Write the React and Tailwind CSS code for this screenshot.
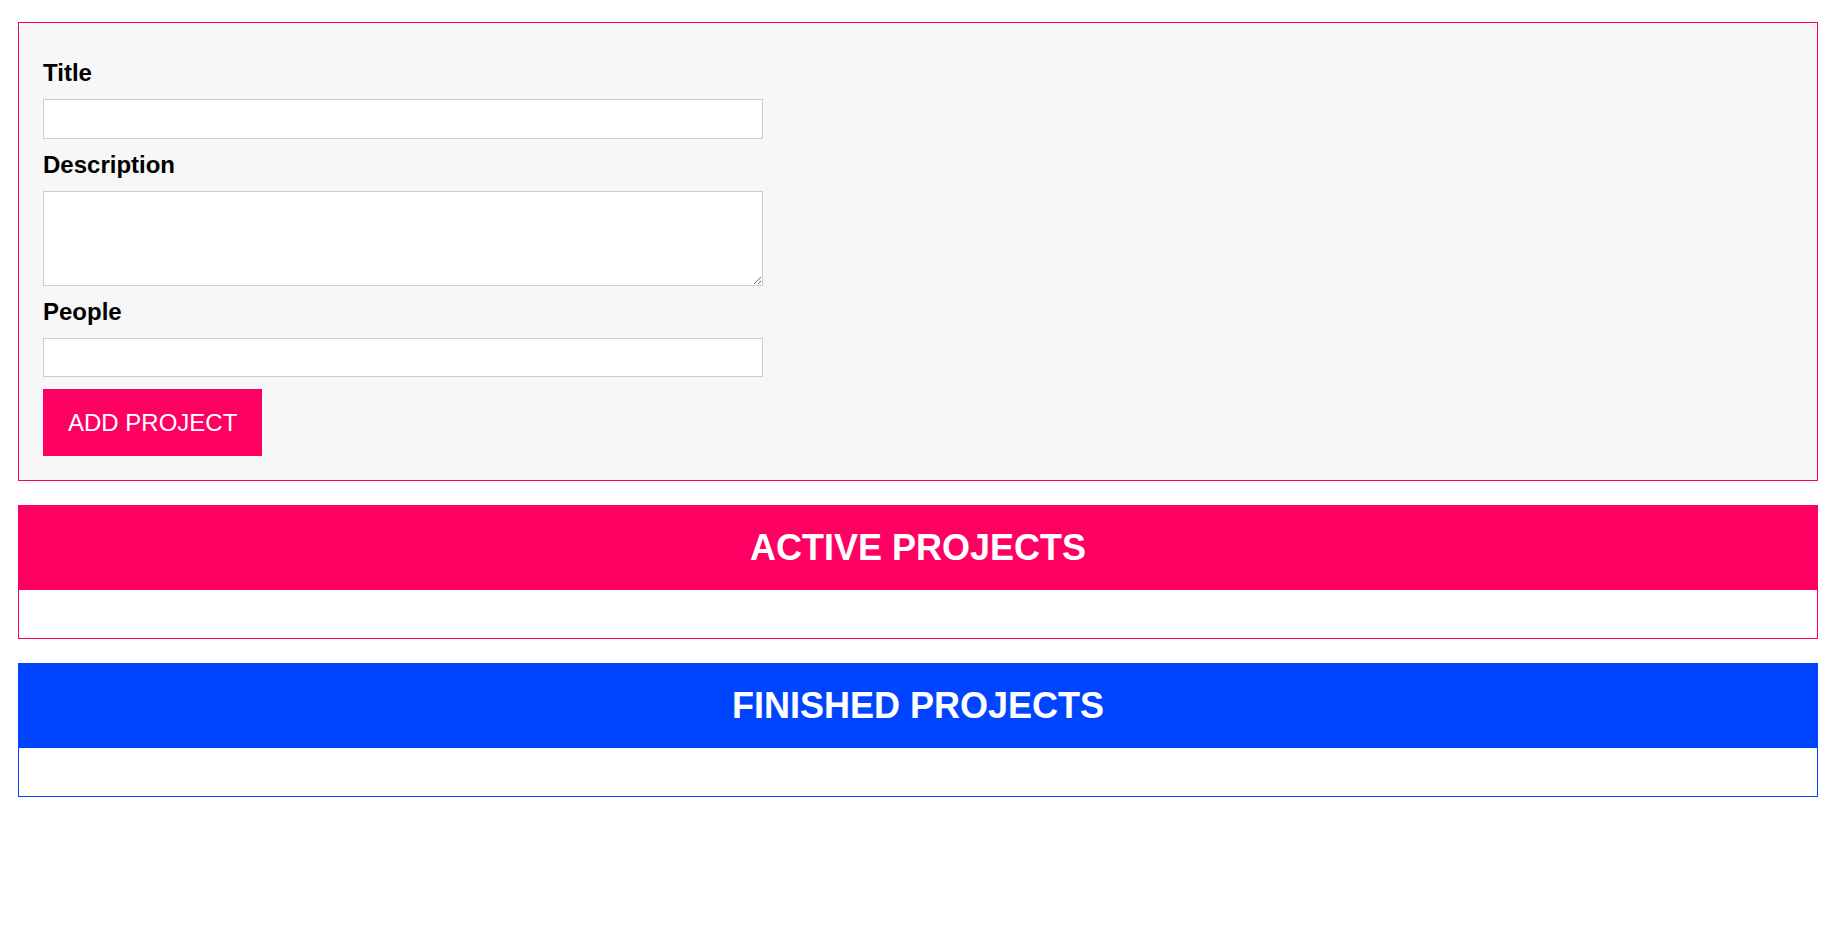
import { useState } from "react";

const fieldClass =
  "block w-full max-w-[720px] my-[12px] px-[10px] py-[4.8px] border border-[#ccc] bg-white text-[24px] leading-[normal] outline-none focus:bg-[#fff5f9]";

const labelClass = "block my-[12px] font-bold text-[24px] leading-[normal]";

const ProjectList = ({ title, variant }) => {
  const isActive = variant === "active";
  return (
    <section
      className={
        "mt-[24px] ml-[18px] mr-[22px] border " +
        (isActive ? "border-[#ff0062]" : "border-[#0044ff]")
      }
    >
      <header
        className={
          "h-[84px] flex items-center justify-center " +
          (isActive ? "bg-[#ff0062]" : "bg-[#0044ff]")
        }
      >
        <h2 className="m-0 text-white font-bold text-[36px] leading-[normal]">
          {title}
        </h2>
      </header>
      <ul className="list-none m-0 p-[24px]"></ul>
    </section>
  );
};

export default function App() {
  const [title, setTitle] = useState("");
  const [description, setDescription] = useState("");
  const [people, setPeople] = useState("");

  return (
    <div
      className="min-h-[938px] bg-white text-black"
      style={{ fontFamily: '"Liberation Sans", Arial, sans-serif' }}
    >
      <div className="pt-[22px]">
        <form
          className="ml-[18px] mr-[22px] p-[24px] border border-[#ff0062] bg-[#f7f7f7]"
          onSubmit={(e) => e.preventDefault()}
        >
          <div>
            <label htmlFor="title" className={labelClass}>
              Title
            </label>
            <input
              id="title"
              type="text"
              className={fieldClass}
              value={title}
              onChange={(e) => setTitle(e.target.value)}
            />
          </div>
          <div>
            <label htmlFor="description" className={labelClass}>
              Description
            </label>
            <textarea
              id="description"
              rows={3}
              className={fieldClass + " h-[95px]"}
              value={description}
              onChange={(e) => setDescription(e.target.value)}
            />
          </div>
          <div>
            <label htmlFor="people" className={labelClass}>
              People
            </label>
            <input
              id="people"
              type="number"
              className={fieldClass}
              value={people}
              onChange={(e) => setPeople(e.target.value)}
            />
          </div>
          <button
            type="submit"
            className="block bg-[#ff0062] border border-[#ff0062] text-white text-[24px] leading-[normal] px-[24px] py-[18.5px] cursor-pointer"
          >
            ADD PROJECT
          </button>
        </form>
      </div>
      <ProjectList title="ACTIVE PROJECTS" variant="active" />
      <ProjectList title="FINISHED PROJECTS" variant="finished" />
    </div>
  );
}
